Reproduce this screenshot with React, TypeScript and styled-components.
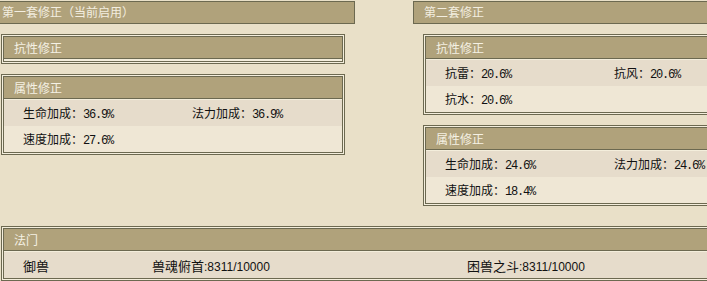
import React from "react";
import styled, { createGlobalStyle } from "styled-components";

const dark = "#6c6950";
const light = "#f4eedc";
const tan = "#b0a27b";

const GlobalStyle = createGlobalStyle`
  html, body {
    margin: 0;
    padding: 0;
    background: #e9e0c8;
    overflow: hidden;
  }
  body {
    font-family: "Noto Sans CJK SC", "Noto Sans", sans-serif;
    font-size: 12px;
    color: #111;
  }
`;

const Page = styled.div`
  width: 800px;
  margin-left: -9px;
  padding-top: 1px;
`;

const Columns = styled.div`
  display: grid;
  grid-template-columns: 364px 364px;
  column-gap: 58px;
  align-items: start;
`;

const Column = styled.div`
  display: flex;
  flex-direction: column;
`;

const SetBar = styled.div`
  height: 23px;
  box-sizing: border-box;
  background: ${tan};
  border: 1px solid ${dark};
  padding-left: 10px;
  color: #f3eee0;
  line-height: 20px;
`;

const Panel = styled.div<{ $top?: number }>`
  margin: ${(p) => p.$top ?? 10}px 10px 0;
  border: 1px solid ${dark};
  background: ${light};
  padding: 1px;
`;

const Inner = styled.div`
  border: 1px solid ${dark};
`;

const Header = styled.div`
  height: 22px;
  box-sizing: border-box;
  background: ${tan};
  border-bottom: 1px solid ${dark};
  padding-left: 10px;
  color: #f5f1e4;
  line-height: 21px;
`;

const Body = styled.div<{ $empty?: boolean }>`
  border-top: 1px solid ${light};
  min-height: ${(p) => (p.$empty ? 1 : 0)}px;
`;

const Row = styled.div<{ $alt?: boolean; $cols?: string }>`
  display: grid;
  grid-template-columns: ${(p) => p.$cols ?? "1fr 1fr"};
  height: 26px;
  align-items: center;
  background: ${(p) => (p.$alt ? "#efe7d5" : "#e6dccb")};
`;

const Cell = styled.div`
  padding-left: 19px;
  white-space: nowrap;
`;

const Num = styled.span`
  font-family: "Liberation Mono", monospace;
  font-size: 12px;
  letter-spacing: -1.2px;
`;

const Skill = styled.span`
  font-size: 13px;
`;

const Count = styled.span`
  font-family: "Liberation Sans", sans-serif;
  font-size: 12px;
`;

const Bottom = styled(Panel)`
  width: 776px;
`;

type Stat = [string, string];

function StatPanel({ title, rows, top }: { title: string; rows: Stat[][]; top?: number }) {
  return (
    <Panel $top={top}>
      <Inner>
        <Header>{title}</Header>
        <Body $empty={rows.length === 0}>
          {rows.map((r, i) => (
            <Row key={i} $alt={i % 2 === 1}>
              {r.map(([k, v]) => (
                <Cell key={k}>
                  {k}：<Num>{v}</Num>
                </Cell>
              ))}
            </Row>
          ))}
        </Body>
      </Inner>
    </Panel>
  );
}

export default function App() {
  return (
    <>
      <GlobalStyle />
      <Page>
        <Columns>
          <Column>
            <SetBar>第一套修正（当前启用）</SetBar>
            <StatPanel title="抗性修正" rows={[]} />
            <StatPanel
              title="属性修正"
              rows={[
                [
                  ["生命加成", "36.9%"],
                  ["法力加成", "36.9%"],
                ],
                [["速度加成", "27.6%"]],
              ]}
            />
          </Column>
          <Column>
            <SetBar>第二套修正</SetBar>
            <StatPanel
              title="抗性修正"
              rows={[
                [
                  ["抗雷", "20.6%"],
                  ["抗风", "20.6%"],
                ],
                [["抗水", "20.6%"]],
              ]}
            />
            <StatPanel
              title="属性修正"
              rows={[
                [
                  ["生命加成", "24.6%"],
                  ["法力加成", "24.6%"],
                ],
                [["速度加成", "18.4%"]],
              ]}
            />
          </Column>
        </Columns>
        <Bottom $top={20}>
          <Inner>
            <Header>法门</Header>
            <Body>
              <Row $cols="129px 315px 315px">
                <Cell>
                  <Skill>御兽</Skill>
                </Cell>
                <Cell>
                  <Skill>兽魂俯首</Skill>
                  <Count>:8311/10000</Count>
                </Cell>
                <Cell>
                  <Skill>困兽之斗</Skill>
                  <Count>:8311/10000</Count>
                </Cell>
              </Row>
            </Body>
          </Inner>
        </Bottom>
      </Page>
    </>
  );
}
